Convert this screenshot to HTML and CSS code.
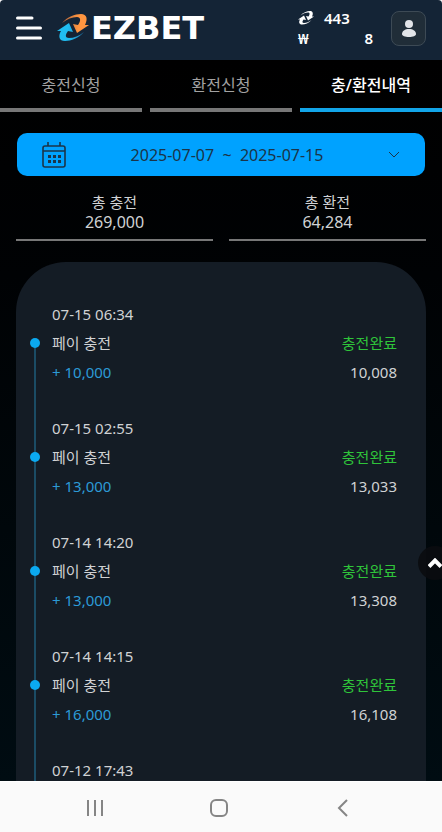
FILE: index.html
```html
<!DOCTYPE html>
<html lang="ko">
<head>
  <meta charset="utf-8">
  <meta name="viewport" content="width=device-width, initial-scale=1">
  <title>EZBET</title>
  <link rel="stylesheet" href="styles.css">
</head>
<body>
  <div class="app">
    <header class="header">
      <button class="menu-button" type="button" aria-label="메뉴">
        <svg width="26" height="24" viewBox="0 0 26 24" stroke="#fff" stroke-width="3" stroke-linecap="round">
          <path d="M1.5 2H16M1.5 12H24.5M1.5 22H24.5"/>
        </svg>
      </button>
      <a class="logo" href="#">
        <svg width="32" height="28" viewBox="0 0 32 28">
          <defs>
            <linearGradient id="orange" x1="0" x2="1"><stop offset="0" stop-color="#a8603c"/><stop offset="0.6" stop-color="#ff9540"/></linearGradient>
            <linearGradient id="blue" x1="0" x2="1"><stop offset="0.4" stop-color="#20bdf2"/><stop offset="1" stop-color="#207fb8"/></linearGradient>
          </defs>
          <path fill="url(#orange)" d="M5 9C10 3 18 0 24 0c6 0 7 5 4 11l4 0-12 8-4-9 5 1c3-4 3-8-1-8C15 3 10 5 5 9z"/>
          <path fill="url(#blue)" d="M27 18C22 24 14 27 8 27c-6 0-7-5-4-10l-4 0 12-8 4 9-5-1c-3 4-3 7 1 7 5 0 10-2 15-6z"/>
        </svg>
        <span>EZBET</span>
      </a>
      <div class="balance">
        <svg width="16" height="14" viewBox="0 0 32 28" fill="#fff">
          <path d="M5 9C10 3 18 0 24 0c6 0 7 5 4 11l4 0-12 8-4-9 5 1c3-4 3-8-1-8C15 3 10 5 5 9z"/>
          <path d="M27 18C22 24 14 27 8 27c-6 0-7-5-4-10l-4 0 12-8 4 9-5-1c-3 4-3 7 1 7 5 0 10-2 15-6z"/>
        </svg>
        <span>443</span>
        <span>₩</span>
        <span class="cash">8</span>
      </div>
      <button class="profile-button" type="button" aria-label="내 정보">
        <svg width="16" height="17" viewBox="0 0 16 17" fill="#e2e4e8">
          <circle cx="8" cy="4" r="4"/>
          <path d="M8 9c4 0 7 2 7 5 0 2-3 3-7 3s-7-1-7-3c0-3 3-5 7-5z"/>
        </svg>
      </button>
    </header>

    <main class="content">
      <nav class="tabs">
        <a class="tab" href="#">충전신청</a>
        <a class="tab" href="#">환전신청</a>
        <a class="tab active" href="#">충/환전내역</a>
      </nav>

      <button class="date-range" type="button">
        <svg width="24" height="26" viewBox="0 0 24 26" fill="none" stroke="#1b3448" stroke-width="1.600">
          <rect x="1" y="4" width="22" height="21" rx="2"/>
          <path d="M1 9H23M6 0V4M18 0V4"/>
          <path stroke-width="3" stroke-dasharray="3 2" d="M6 14.500H19M6 19.500H19"/>
        </svg>
        <span class="dates">2025-07-07 &nbsp;~&nbsp; 2025-07-15</span>
        <svg width="12" height="8" viewBox="0 0 12 8" fill="none" stroke="#1b3448">
          <path d="M1 1L6 6L11 1"/>
        </svg>
      </button>

      <div class="totals">
        <div class="total">
          <div>총 충전</div>
          <div class="total-amount">269,000</div>
        </div>
        <div class="total">
          <div>총 환전</div>
          <div class="total-amount">64,284</div>
        </div>
      </div>

      <ul class="history">
        <li class="entry">
          <div class="row">07-15 06:34</div>
          <div class="row type"><span>페이 충전</span><span class="status">충전완료</span></div>
          <div class="row"><span class="amount">+ 10,000</span><span>10,008</span></div>
        </li>
        <li class="entry">
          <div class="row">07-15 02:55</div>
          <div class="row type"><span>페이 충전</span><span class="status">충전완료</span></div>
          <div class="row"><span class="amount">+ 13,000</span><span>13,033</span></div>
        </li>
        <li class="entry">
          <div class="row">07-14 14:20</div>
          <div class="row type"><span>페이 충전</span><span class="status">충전완료</span></div>
          <div class="row"><span class="amount">+ 13,000</span><span>13,308</span></div>
        </li>
        <li class="entry">
          <div class="row">07-14 14:15</div>
          <div class="row type"><span>페이 충전</span><span class="status">충전완료</span></div>
          <div class="row"><span class="amount">+ 16,000</span><span>16,108</span></div>
        </li>
        <li class="entry">
          <div class="row">07-12 17:43</div>
        </li>
      </ul>
    </main>

    <button class="to-top" type="button" aria-label="맨 위로">
      <svg width="14" height="10" viewBox="0 0 14 10" fill="none" stroke="#fff" stroke-width="4">
        <path d="M1 8.500L7 2.500L13 8.500"/>
      </svg>
    </button>

    <footer class="system-nav">
      <button type="button" aria-label="최근 앱">
        <svg width="18" height="18" viewBox="0 0 18 18" stroke="#858585" stroke-width="2"><path d="M2 1V17M9 1V17M16 1V17"/></svg>
      </button>
      <button type="button" aria-label="홈">
        <svg width="18" height="18" viewBox="0 0 18 18" fill="none" stroke="#858585" stroke-width="2"><rect x="1" y="1" width="16" height="16" rx="5"/></svg>
      </button>
      <button type="button" aria-label="뒤로">
        <svg width="18" height="18" viewBox="0 0 18 18" fill="none" stroke="#858585" stroke-width="2"><path d="M13 1L5 9L13 17"/></svg>
      </button>
    </footer>
  </div>
</body>
</html>
```
FILE: styles.css
```css
* {
  box-sizing: border-box;
}

body {
  margin: 0;
  background-color: #fafafa;
  color: #d0d2d4;
  font-family: "Noto Sans", "Noto Sans CJK KR", sans-serif;
  font-size: 15px;
}

button {
  padding: 0;
  border: none;
  background: none;
  font-family: inherit;
  cursor: pointer;
}

a {
  color: inherit;
  text-decoration: none;
}

svg {
  display: block;
  flex-shrink: 0;
}

.app {
  position: relative;
  display: flex;
  flex-direction: column;
  height: 100vh;
  overflow: hidden;
}

.header {
  display: flex;
  flex-shrink: 0;
  align-items: center;
  height: 60px;
  padding: 0 16px 4px;
  border-radius: 4px 4px 0 0;
  background-color: #142436;
}

.logo {
  display: flex;
  align-items: center;
  gap: 2px;
  margin-left: 15px;
  color: #fff;
  font-family: "DejaVu Sans", sans-serif;
  font-size: 32px;
  font-weight: bold;
  line-height: 32px;
}

.balance {
  display: grid;
  grid-template-columns: 16px 49px;
  column-gap: 10px;
  align-items: center;
  margin-left: auto;
  color: #fff;
  font-size: 15px;
  font-weight: 600;
  line-height: 20px;
}

.cash {
  text-align: right;
}

.profile-button {
  display: flex;
  align-items: center;
  justify-content: center;
  width: 35px;
  height: 35px;
  margin-left: 18px;
  border: 1px solid #3d4a55;
  border-radius: 8px;
  background-color: #202d38;
}

.content {
  flex: 1;
  min-height: 0;
  overflow: hidden;
  background: linear-gradient(#000 0%, #000204 30%, #000c12 100%);
}

.tabs {
  display: grid;
  grid-template-columns: repeat(3, 1fr);
  gap: 8px;
}

.tab {
  height: 52px;
  border-bottom: 4px solid #777;
  color: #a2a2a2;
  font-size: 16px;
  line-height: 50px;
  text-align: center;
}

.tab.active {
  border-color: #12a5e8;
  color: #fff;
  font-weight: 500;
}

.date-range {
  display: flex;
  align-items: center;
  width: calc(100% - 34px);
  height: 43px;
  margin: 21px 17px 16px;
  padding: 0 25px;
  border-radius: 10px;
  background-color: #00a2ff;
  color: #1b3448;
  font-size: 16px;
}

.dates {
  flex: 1;
  text-align: center;
}

.totals {
  display: grid;
  grid-template-columns: 1fr 1fr;
  gap: 16px;
  padding: 0 16px;
}

.total {
  padding-bottom: 7px;
  border-bottom: 2px solid #777;
  line-height: 20px;
  text-align: center;
}

.total-amount {
  font-size: 16px;
}

.history {
  margin: 21px 16px 0;
  padding: 38px 29px 100px 36px;
  border-radius: 50px;
  background-color: #141c25;
  list-style: none;
}

.entry {
  position: relative;
  padding-bottom: 27px;
}

.row {
  display: flex;
  justify-content: space-between;
  line-height: 29px;
}

/* timeline */
.entry::before {
  content: "";
  position: absolute;
  top: 43px;
  bottom: -43px;
  left: -18px;
  width: 2px;
  background-color: #1b4c65;
}

.type::before {
  content: "";
  position: absolute;
  top: 38px;
  left: -22px;
  width: 10px;
  height: 10px;
  border-radius: 50%;
  background-color: #0ba9f0;
}

.amount {
  color: #2c9ad6;
}

.status {
  color: #2fc43a;
}

.to-top {
  position: absolute;
  right: -10px;
  bottom: 252px;
  display: flex;
  align-items: center;
  justify-content: center;
  width: 34px;
  height: 34px;
  border-radius: 50%;
  background-color: rgba(10, 12, 15, 0.9);
}

.system-nav {
  display: flex;
  flex-shrink: 0;
  align-items: center;
  justify-content: center;
  gap: 106px;
  height: 51px;
  padding: 2px 4px 0 0;
  border-top: 1px solid #fff;
  background-color: #fafafa;
}
```
